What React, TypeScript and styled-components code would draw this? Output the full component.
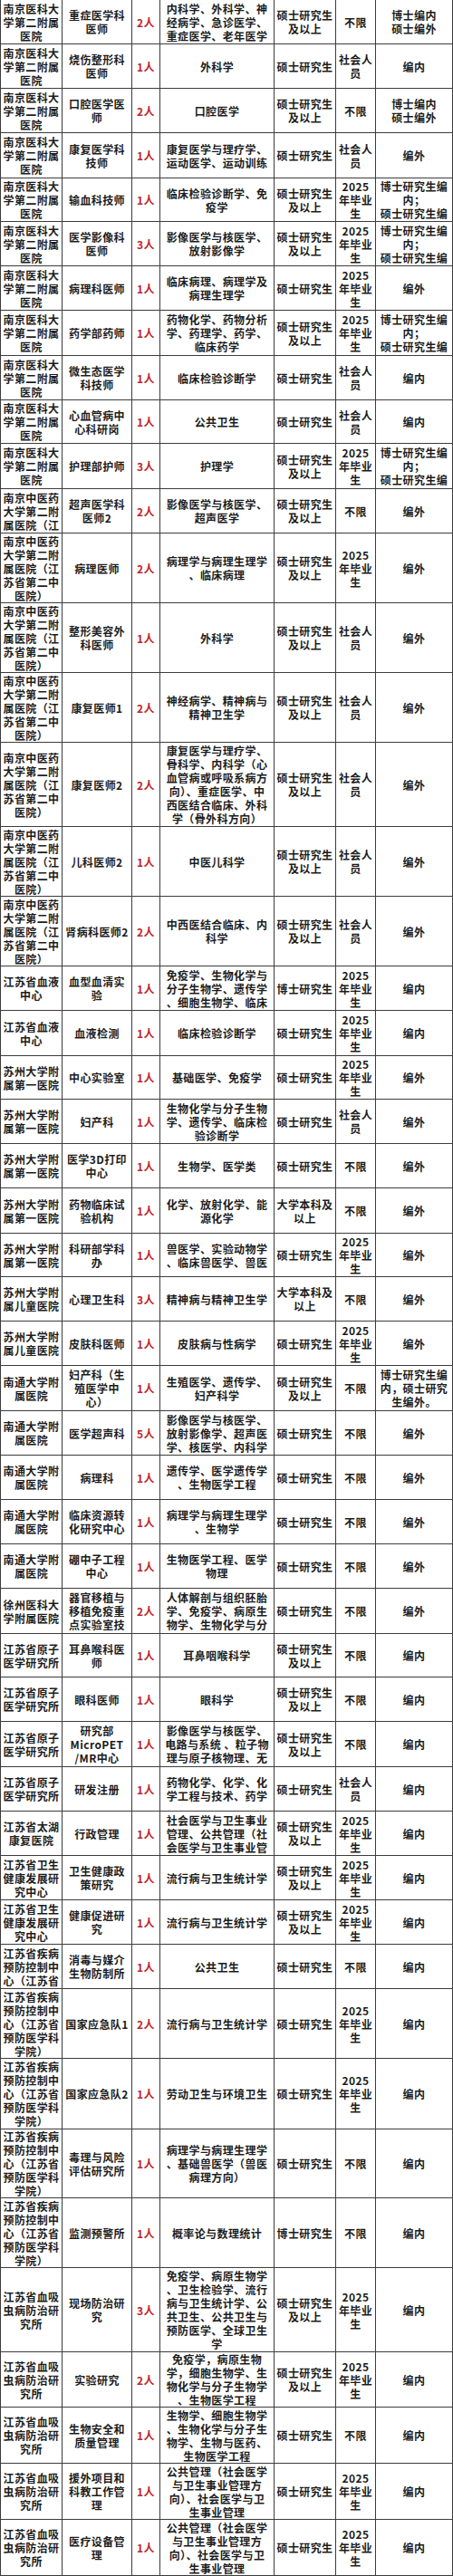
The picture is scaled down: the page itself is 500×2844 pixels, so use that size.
import React from "react";
import styled, { createGlobalStyle } from "styled-components";

const GlobalStyle = createGlobalStyle`
  html, body { margin: 0; padding: 0; background: #ffffff; }
  body {
    font-family: "Noto Sans CJK SC", "Noto Sans", sans-serif;
    color: #1c1c1c;
  }
`;

type Job = {
  org: string;
  post: string;
  num: string;
  major: string;
  edu: string;
  src: string;
  status: string;
  h: number;
};

const NJ2 = "南京医科大\n学第二附属\n医院";
const ZY3 = "南京中医药\n大学第二附\n属医院（江";
const ZY5 = "南京中医药\n大学第二附\n属医院（江\n苏省第二中\n医院）";
const SZ1 = "苏州大学附\n属第一医院";
const SZE = "苏州大学附\n属儿童医院";
const NT = "南通大学附\n属医院";
const YZ = "江苏省原子\n医学研究所";
const WS = "江苏省卫生\n健康发展研\n究中心";
const JK5 = "江苏省疾病\n预防控制中\n心（江苏省\n预防医学科\n学院）";
const XX = "江苏省血吸\n虫病防治研\n究所";
const SS = "硕士研究生";
const SSY = "硕士研究生\n及以上";
const BY = "2025\n年毕业\n生";
const SH = "社会人\n员";
const BSN = "博士研究生编\n内；\n硕士研究生编";

const jobs: Job[] = [
  { org: NJ2, post: "重症医学科\n医师", num: "2人", major: "内科学、外科学、神\n经病学、急诊医学、\n重症医学、老年医学", edu: SSY, src: "不限", status: "博士编内\n硕士编外", h: 49 },
  { org: NJ2, post: "烧伤整形科\n医师", num: "1人", major: "外科学", edu: SS, src: SH, status: "编内", h: 49 },
  { org: NJ2, post: "口腔医学医\n师", num: "2人", major: "口腔医学", edu: SSY, src: "不限", status: "博士编内\n硕士编外", h: 49 },
  { org: NJ2, post: "康复医学科\n技师", num: "1人", major: "康复医学与理疗学、\n运动医学、运动训练", edu: SS, src: SH, status: "编外", h: 50 },
  { org: NJ2, post: "输血科技师", num: "1人", major: "临床检验诊断学、免\n疫学", edu: SSY, src: BY, status: BSN, h: 48 },
  { org: NJ2, post: "医学影像科\n医师", num: "3人", major: "影像医学与核医学、\n放射影像学", edu: SSY, src: BY, status: BSN, h: 49 },
  { org: NJ2, post: "病理科医师", num: "1人", major: "临床病理、病理学及\n病理生理学", edu: SS, src: BY, status: "编外", h: 49 },
  { org: NJ2, post: "药学部药师", num: "1人", major: "药物化学、药物分析\n学、药理学、药学、\n临床药学", edu: SSY, src: BY, status: BSN, h: 50 },
  { org: NJ2, post: "微生态医学\n科技师", num: "1人", major: "临床检验诊断学", edu: SS, src: SH, status: "编内", h: 49 },
  { org: NJ2, post: "心血管病中\n心科研岗", num: "1人", major: "公共卫生", edu: SS, src: SH, status: "编内", h: 48 },
  { org: NJ2, post: "护理部护师", num: "3人", major: "护理学", edu: SSY, src: BY, status: BSN, h: 50 },
  { org: ZY3, post: "超声医学科\n医师2", num: "2人", major: "影像医学与核医学、\n超声医学", edu: SSY, src: "不限", status: "编外", h: 49 },
  { org: ZY5, post: "病理医师", num: "2人", major: "病理学与病理生理学\n、临床病理", edu: SSY, src: BY, status: "编外", h: 77 },
  { org: ZY5, post: "整形美容外\n科医师", num: "1人", major: "外科学", edu: SSY, src: SH, status: "编外", h: 77 },
  { org: ZY5, post: "康复医师1", num: "2人", major: "神经病学、精神病与\n精神卫生学", edu: SSY, src: SH, status: "编外", h: 77 },
  { org: ZY5, post: "康复医师2", num: "2人", major: "康复医学与理疗学、\n骨科学、内科学（心\n血管病或呼吸系病方\n向）、重症医学、中\n西医结合临床、外科\n学（骨外科方向）", edu: SSY, src: SH, status: "编外", h: 93 },
  { org: ZY5, post: "儿科医师2", num: "1人", major: "中医儿科学", edu: SSY, src: SH, status: "编外", h: 77 },
  { org: ZY5, post: "肾病科医师2", num: "2人", major: "中西医结合临床、内\n科学", edu: SSY, src: SH, status: "编外", h: 77 },
  { org: "江苏省血液\n中心", post: "血型血清实\n验", num: "1人", major: "免疫学、生物化学与\n分子生物学、遗传学\n、细胞生物学、临床", edu: "博士研究生", src: BY, status: "编内", h: 49 },
  { org: "江苏省血液\n中心", post: "血液检测", num: "1人", major: "临床检验诊断学", edu: SS, src: BY, status: "编内", h: 50 },
  { org: SZ1, post: "中心实验室", num: "1人", major: "基础医学、免疫学", edu: SS, src: BY, status: "编外", h: 48 },
  { org: SZ1, post: "妇产科", num: "1人", major: "生物化学与分子生物\n学、遗传学、临床检\n验诊断学", edu: SS, src: SH, status: "编外", h: 49 },
  { org: SZ1, post: "医学3D打印\n中心", num: "1人", major: "生物学、医学类", edu: SS, src: "不限", status: "编外", h: 49 },
  { org: SZ1, post: "药物临床试\n验机构", num: "1人", major: "化学、放射化学、能\n源化学", edu: "大学本科及\n以上", src: "不限", status: "编外", h: 50 },
  { org: SZ1, post: "科研部学科\n办", num: "1人", major: "兽医学、实验动物学\n、临床兽医学、兽医", edu: SS, src: BY, status: "编外", h: 48 },
  { org: SZE, post: "心理卫生科", num: "3人", major: "精神病与精神卫生学", edu: "大学本科及\n以上", src: "不限", status: "编外", h: 49 },
  { org: SZE, post: "皮肤科医师", num: "1人", major: "皮肤病与性病学", edu: SS, src: BY, status: "编外", h: 49 },
  { org: NT, post: "妇产科（生\n殖医学中\n心）", num: "1人", major: "生殖医学、遗传学、\n妇产科学", edu: SSY, src: "不限", status: "博士研究生编\n内，硕士研究\n生编外。", h: 50 },
  { org: NT, post: "医学超声科", num: "5人", major: "影像医学与核医学、\n放射影像学、超声医\n学、核医学、内科学", edu: SS, src: "不限", status: "编外", h: 49 },
  { org: NT, post: "病理科", num: "1人", major: "遗传学、医学遗传学\n、生物医学工程", edu: SS, src: "不限", status: "编外", h: 49 },
  { org: NT, post: "临床资源转\n化研究中心", num: "1人", major: "病理学与病理生理学\n、生物学", edu: SS, src: "不限", status: "编外", h: 49 },
  { org: NT, post: "硼中子工程\n中心", num: "1人", major: "生物医学工程、医学\n物理", edu: SS, src: "不限", status: "编外", h: 49 },
  { org: "徐州医科大\n学附属医院", post: "器官移植与\n移植免疫重\n点实验室技", num: "2人", major: "人体解剖与组织胚胎\n学、免疫学、病原生\n物学、生物化学与分", edu: SS, src: "不限", status: "编外", h: 50 },
  { org: YZ, post: "耳鼻喉科医\n师", num: "1人", major: "耳鼻咽喉科学", edu: SSY, src: "不限", status: "编内", h: 48 },
  { org: YZ, post: "眼科医师", num: "1人", major: "眼科学", edu: SSY, src: "不限", status: "编内", h: 49 },
  { org: YZ, post: "研究部\nMicroPET\n/MR中心", num: "1人", major: "影像医学与核医学、\n电路与系统 、粒子物\n理与原子核物理、无", edu: SSY, src: "不限", status: "编内", h: 50 },
  { org: YZ, post: "研发注册", num: "1人", major: "药物化学、化学、化\n学工程与技术、药学", edu: SS, src: SH, status: "编内", h: 49 },
  { org: "江苏省太湖\n康复医院", post: "行政管理", num: "1人", major: "社会医学与卫生事业\n管理、公共管理（社\n会医学与卫生事业管", edu: SSY, src: BY, status: "编内", h: 49 },
  { org: WS, post: "卫生健康政\n策研究", num: "1人", major: "流行病与卫生统计学", edu: SSY, src: BY, status: "编内", h: 49 },
  { org: WS, post: "健康促进研\n究", num: "1人", major: "流行病与卫生统计学", edu: SSY, src: BY, status: "编内", h: 49 },
  { org: "江苏省疾病\n预防控制中\n心（江苏省", post: "消毒与媒介\n生物防制所", num: "1人", major: "公共卫生", edu: SS, src: "不限", status: "编内", h: 49 },
  { org: JK5, post: "国家应急队1", num: "2人", major: "流行病与卫生统计学", edu: SS, src: BY, status: "编内", h: 77 },
  { org: JK5, post: "国家应急队2", num: "1人", major: "劳动卫生与环境卫生", edu: SS, src: BY, status: "编内", h: 78 },
  { org: JK5, post: "毒理与风险\n评估研究所", num: "1人", major: "病理学与病理生理学\n、基础兽医学（兽医\n病理方向）", edu: SS, src: "不限", status: "编内", h: 76 },
  { org: JK5, post: "监测预警所", num: "1人", major: "概率论与数理统计", edu: "博士研究生", src: "不限", status: "编内", h: 77 },
  { org: XX, post: "现场防治研\n究", num: "3人", major: "免疫学、病原生物学\n、卫生检验学、流行\n病与卫生统计学、公\n共卫生、公共卫生与\n预防医学、全球卫生\n学", edu: SSY, src: BY, status: "编内", h: 93 },
  { org: XX, post: "实验研究", num: "2人", major: "免疫学，病原生物\n学，细胞生物学、生\n物化学与分子生物学\n、生物医学工程", edu: SSY, src: BY, status: "编内", h: 61 },
  { org: XX, post: "生物安全和\n质量管理", num: "1人", major: "生物学、细胞生物学\n、生物化学与分子生\n物学、生物与医药、\n生物医学工程", edu: SS, src: "不限", status: "编内", h: 62 },
  { org: XX, post: "援外项目和\n科教工作管\n理", num: "1人", major: "公共管理（社会医学\n与卫生事业管理方\n向）、社会医学与卫\n生事业管理", edu: SS, src: BY, status: "编内", h: 62 },
  { org: XX, post: "医疗设备管\n理", num: "1人", major: "公共管理（社会医学\n与卫生事业管理方\n向）、社会医学与卫\n生事业管理", edu: SS, src: BY, status: "编内", h: 62 },
];

const Table = styled.div`
  width: 500px;
  display: flex;
  flex-direction: column;
  background: #ffffff;
`;

const Row = styled.div<{ $h: number }>`
  display: grid;
  grid-template-columns: 68px 77px 31px 126px 68px 44px 85px;
  height: ${(p) => p.$h}px;
  border-left: 1px solid #3c3c3c;
  box-sizing: border-box;
`;

const Cell = styled.div<{ $red?: boolean }>`
  box-sizing: border-box;
  display: flex;
  align-items: center;
  justify-content: center;
  text-align: center;
  overflow: hidden;
  white-space: pre;
  border-right: 1px solid #3c3c3c;
  border-bottom: 1px solid #3c3c3c;
  font-family: "Noto Sans CJK SC", "Noto Sans", sans-serif;
  font-size: 12px;
  font-weight: 700;
  letter-spacing: 0.4px;
  line-height: 15px;
  color: ${(p) => (p.$red ? "#c0262b" : "#1c1c1c")};
`;

export default function App() {
  return (
    <>
      <GlobalStyle />
      <Table>
        {jobs.map((j, i) => (
          <Row key={i} $h={j.h}>
            <Cell>{j.org}</Cell>
            <Cell>{j.post}</Cell>
            <Cell $red>{j.num}</Cell>
            <Cell>{j.major}</Cell>
            <Cell>{j.edu}</Cell>
            <Cell>{j.src}</Cell>
            <Cell>{j.status}</Cell>
          </Row>
        ))}
      </Table>
    </>
  );
}
